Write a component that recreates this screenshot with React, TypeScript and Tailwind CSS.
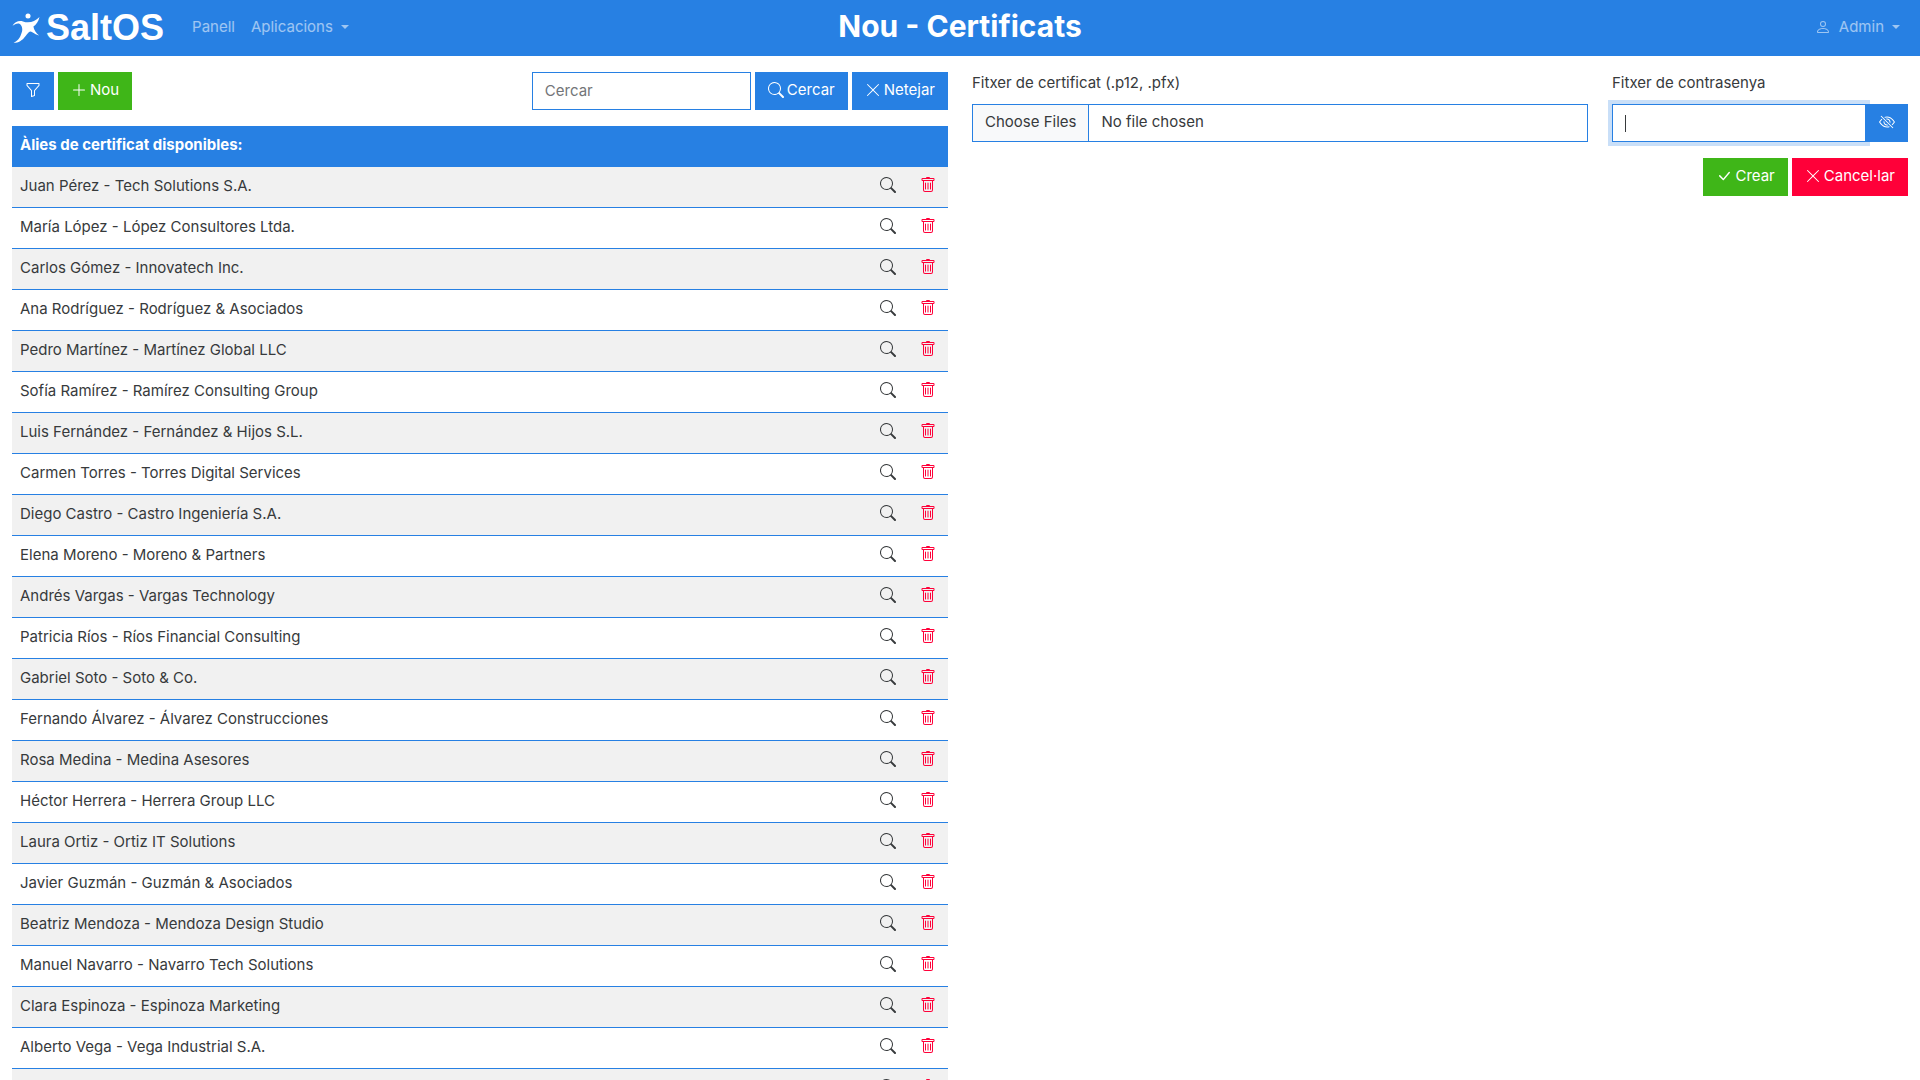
import React from "react";
import {
  BsCheckLg,
  BsEyeSlash,
  BsFunnel,
  BsPerson,
  BsPlusLg,
  BsSearch,
  BsTrash,
  BsXLg,
} from "react-icons/bs";

const certificates = [
  "Juan Pérez - Tech Solutions S.A.",
  "María López - López Consultores Ltda.",
  "Carlos Gómez - Innovatech Inc.",
  "Ana Rodríguez - Rodríguez & Asociados",
  "Pedro Martínez - Martínez Global LLC",
  "Sofía Ramírez - Ramírez Consulting Group",
  "Luis Fernández - Fernández & Hijos S.L.",
  "Carmen Torres - Torres Digital Services",
  "Diego Castro - Castro Ingeniería S.A.",
  "Elena Moreno - Moreno & Partners",
  "Andrés Vargas - Vargas Technology",
  "Patricia Ríos - Ríos Financial Consulting",
  "Gabriel Soto - Soto & Co.",
  "Fernando Álvarez - Álvarez Construcciones",
  "Rosa Medina - Medina Asesores",
  "Héctor Herrera - Herrera Group LLC",
  "Laura Ortiz - Ortiz IT Solutions",
  "Javier Guzmán - Guzmán & Asociados",
  "Beatriz Mendoza - Mendoza Design Studio",
  "Manuel Navarro - Navarro Tech Solutions",
  "Clara Espinoza - Espinoza Marketing",
  "Alberto Vega - Vega Industrial S.A.",
  "",
];

const tones = {
  primary: "bg-[#2780e3]",
  success: "bg-[#3fb618]",
  danger: "bg-[#ff0039]",
};

type ButtonProps = {
  tone: keyof typeof tones;
  icon: React.ReactNode;
  label: string;
  iconOnly?: boolean;
};

function Button({ tone, icon, label, iconOnly }: ButtonProps) {
  return (
    <button
      type="button"
      aria-label={iconOnly ? label : undefined}
      className={`flex h-[38px] shrink-0 items-center gap-[3px] px-[13px] pb-0.5 text-white ${tones[tone]}`}
    >
      {icon}
      {!iconOnly && <span>{label}</span>}
    </button>
  );
}

function Caret() {
  return <span className="border-x-4 border-t-4 border-x-transparent border-t-current" />;
}

function Logo() {
  return (
    <a href="#" aria-label="SaltOS" className="flex items-center gap-1.5 text-white">
      <svg viewBox="34 40 82 92" className="h-[31px] w-7" fill="currentColor" aria-hidden="true">
        <circle cx="81" cy="49" r="7.5" />
        <path d="M35 78C41 67 54 61 66 65C84 71 101 66 115 52C112 66 105 75 97 80C98 90 106 100 114 107C101 104 96 96 88 95C77 96 70 129 38 129C55 122 60 106 63 96C66 86 62 74 54 71C46 70 41 74 35 78Z" />
      </svg>
      <span className="font-['Liberation_Sans',sans-serif] text-[36px] leading-9 font-bold">SaltOS</span>
    </a>
  );
}

function Navbar() {
  return (
    <header className="grid h-14 grid-cols-[1fr_auto_1fr] items-center bg-[#2780e3] px-3">
      <div className="flex items-center">
        <Logo />
        <nav className="ml-7 flex gap-4 pb-0.5 text-white/55">
          <a href="#">Panell</a>
          <button type="button" className="flex items-center gap-2">
            Aplicacions
            <Caret />
          </button>
        </nav>
      </div>
      <h1 className="pb-1 text-3xl font-bold text-white">Nou - Certificats</h1>
      <button
        type="button"
        className="mr-2 flex items-center gap-2 justify-self-end pb-0.5 text-white/55"
      >
        <BsPerson />
        Admin
        <Caret />
      </button>
    </header>
  );
}

function CertificateList() {
  return (
    <section className="min-w-0">
      <form className="flex gap-1" onSubmit={(e) => e.preventDefault()}>
        <Button tone="primary" icon={<BsFunnel />} label="Filtre" iconOnly />
        <Button tone="success" icon={<BsPlusLg />} label="Nou" />
        <input
          type="search"
          aria-label="Cercar"
          placeholder="Cercar"
          className="ml-auto h-[38px] w-[219px] border border-[#2780e3] px-3 pb-0.5 placeholder:text-[#737578]"
        />
        <Button tone="primary" icon={<BsSearch />} label="Cercar" />
        <Button tone="primary" icon={<BsXLg />} label="Netejar" />
      </form>
      <table className="mt-4 w-full border-separate border-spacing-0">
        <thead>
          <tr className="h-[41px] bg-[#2780e3] text-left text-white">
            <th scope="col" colSpan={3} className="px-2 pb-1 font-bold">
              Àlies de certificat disponibles:
            </th>
          </tr>
        </thead>
        <tbody>
          {certificates.map((name, i) => (
            <tr
              key={i}
              className="h-[41px] odd:bg-[#f1f1f1] *:border-b *:border-[#2780e3]"
            >
              <td className="px-2 pb-0.5">{name}</td>
              <td className="w-10 px-3 pb-1">
                <button type="button" aria-label={`Veure ${name}`} className="block">
                  <BsSearch />
                </button>
              </td>
              <td className="w-10 px-3 pb-1">
                <button
                  type="button"
                  aria-label={`Eliminar ${name}`}
                  className="block text-[#ff0039]"
                >
                  <BsTrash />
                </button>
              </td>
            </tr>
          ))}
        </tbody>
      </table>
    </section>
  );
}

function NewCertificateForm() {
  return (
    <form
      className="grid min-w-0 grid-cols-3 content-start gap-x-6 gap-y-4"
      onSubmit={(e) => e.preventDefault()}
    >
      <div className="col-span-2">
        <label htmlFor="certificate" className="mb-2 block leading-[22px]">
          Fitxer de certificat (.p12, .pfx)
        </label>
        <input
          id="certificate"
          type="file"
          multiple
          className="mt-[10px] block h-[38px] w-full border border-[#2780e3] leading-[34px] file:mr-3 file:h-9 file:border-r file:border-[#2780e3] file:bg-[#f8f9fa] file:px-3 file:pb-0.5 file:text-[#373a3c]"
        />
      </div>
      <div>
        <label htmlFor="password" className="mb-[10px] block leading-[22px]">
          Fitxer de contrasenya
        </label>
        <div className="relative flex">
          <input
            id="password"
            type="password"
            autoFocus
            className="h-[38px] min-w-0 flex-1 border border-[#2780e3] px-3 caret-transparent outline-none focus:ring-4 focus:ring-[#2780e3]/25"
          />
          <span
            aria-hidden="true"
            className="pointer-events-none absolute top-[11px] left-[13px] h-[17px] w-px bg-[#373a3c]"
          />
          <div className="z-10">
            <Button tone="primary" icon={<BsEyeSlash />} label="Mostrar contrasenya" iconOnly />
          </div>
        </div>
      </div>
      <div className="col-span-3 flex justify-end gap-1">
        <Button tone="success" icon={<BsCheckLg />} label="Crear" />
        <Button tone="danger" icon={<BsXLg />} label="Cancel·lar" />
      </div>
    </form>
  );
}

export default function App() {
  return (
    <div className="h-screen overflow-hidden bg-white font-['Inter',sans-serif] text-[15px] leading-6 text-[#373a3c] [&_button>svg]:size-4">
      <Navbar />
      <main className="grid grid-cols-2 gap-6 px-3 pt-4">
        <CertificateList />
        <NewCertificateForm />
      </main>
    </div>
  );
}
